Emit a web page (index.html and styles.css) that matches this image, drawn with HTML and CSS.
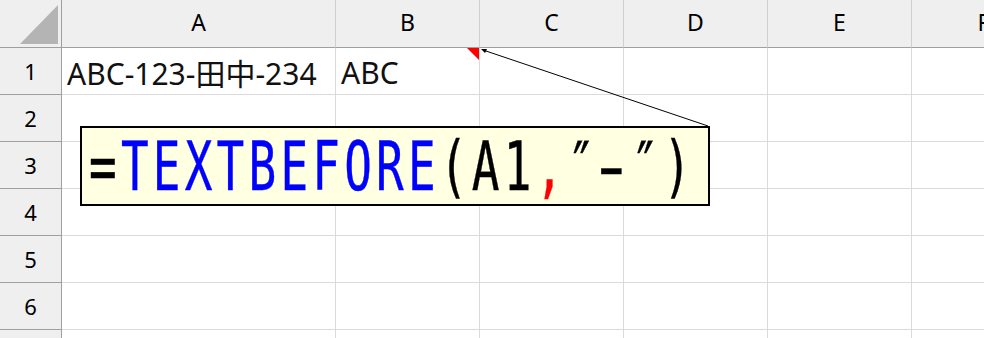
FILE: index.html
```html
<!DOCTYPE html>
<html lang="ja">
<head>
  <meta charset="UTF-8">
  <title>TEXTBEFORE</title>
  <link rel="stylesheet" href="styles.css">
</head>
<body>

<div class="sheet">
  <div class="grid">
    <div class="corner"><span class="corner-mark"></span></div>
    <div class="col-head">A</div>
    <div class="col-head">B</div>
    <div class="col-head">C</div>
    <div class="col-head">D</div>
    <div class="col-head">E</div>
    <div class="col-head">F</div>

    <div class="row-head">1</div>
    <div class="cell">ABC-123-田中-234</div>
    <div class="cell">ABC</div>
    <div class="cell"></div><div class="cell"></div><div class="cell"></div><div class="cell"></div>

    <div class="row-head">2</div>
    <div class="cell"></div><div class="cell"></div><div class="cell"></div><div class="cell"></div><div class="cell"></div><div class="cell"></div>

    <div class="row-head">3</div>
    <div class="cell"></div><div class="cell"></div><div class="cell"></div><div class="cell"></div><div class="cell"></div><div class="cell"></div>

    <div class="row-head">4</div>
    <div class="cell"></div><div class="cell"></div><div class="cell"></div><div class="cell"></div><div class="cell"></div><div class="cell"></div>

    <div class="row-head">5</div>
    <div class="cell"></div><div class="cell"></div><div class="cell"></div><div class="cell"></div><div class="cell"></div><div class="cell"></div>

    <div class="row-head">6</div>
    <div class="cell"></div><div class="cell"></div><div class="cell"></div><div class="cell"></div><div class="cell"></div><div class="cell"></div>

    <div class="row-head"></div>
    <div class="cell"></div><div class="cell"></div><div class="cell"></div><div class="cell"></div><div class="cell"></div><div class="cell"></div>
  </div>

  <!-- comment marker and callout line -->
  <svg class="callout-line" width="984" height="338" viewBox="0 0 984 338">
    <polygon points="467,48 479,48 479,60" fill="#ff0000"/>
    <line x1="708" y1="126" x2="483" y2="50" stroke="#000" stroke-width="1"/>
    <polygon points="481,49 487,49 485,53" fill="#000"/>
  </svg>

  <div class="formula-box">
    <span class="formula"><span class="black">=</span><span class="fn">TEXTBEFORE</span><span class="black">(A1</span><span class="sep">,</span><span class="black">″<span class="dash">-</span>″)</span></span>
  </div>
</div>

</body>
</html>
```

FILE: styles.css
```css
body {
  margin: 0;
  background: #fff;
  font-family: "Noto Sans", "Noto Sans CJK JP", sans-serif;
  overflow: hidden;
}
.sheet {
  position: relative;
  width: 984px;
  height: 338px;
  overflow: hidden;
}
.grid {
  display: grid;
  grid-template-columns: 62px 274px 144px 144px 144px 144px 144px;
  grid-template-rows: 48px repeat(7, 47px);
}
.corner, .col-head, .row-head, .cell {
  box-sizing: border-box;
}
.corner {
  background: #efefef;
  border-right: 1px solid #9f9f9f;
  border-bottom: 1px solid #9f9f9f;
  position: relative;
}
.corner-mark {
  position: absolute;
  left: 20px;
  top: 5px;
  width: 38px;
  height: 39px;
  background: #b4b4b4;
  clip-path: polygon(100% 0, 100% 100%, 0 100%);
}
.col-head {
  background: #efefef;
  border-right: 1px solid #d0d0d0;
  border-bottom: 1px solid #9f9f9f;
  display: flex;
  align-items: center;
  justify-content: center;
  font-size: 23px;
  color: #000;
  padding-bottom: 4px;
}
.row-head {
  background: #efefef;
  border-right: 1px solid #9f9f9f;
  border-bottom: 1px solid #9f9f9f;
  display: flex;
  align-items: center;
  justify-content: center;
  font-size: 22px;
  color: #000;
}
.cell {
  border-right: 1px solid #dadada;
  border-bottom: 1px solid #dadada;
  display: flex;
  align-items: center;
  padding-left: 5px;
  padding-top: 2px;
  font-size: 30px;
  color: #111;
  white-space: nowrap;
  overflow: visible;
}
.callout-line {
  position: absolute;
  left: 0;
  top: 0;
}
.formula-box {
  position: absolute;
  left: 80px;
  top: 126px;
  width: 630px;
  height: 80px;
  box-sizing: border-box;
  border: 2px solid #000;
  background: #ffffe1;
  padding-left: 7px;
  display: flex;
  align-items: center;
}
.formula {
  display: inline-block;
  font-family: "DejaVu Sans Mono", "Liberation Mono", monospace;
  font-size: 46px;
  letter-spacing: 4.2px;
  line-height: 1;
  white-space: nowrap;
  transform: scaleY(1.48);
  transform-origin: center;
  -webkit-text-stroke: 0.3px currentColor;
}
.dash {
  display: inline-block;
  transform: scaleX(1.7);
}
.black {
  color: #000;
}
.fn {
  color: #0000ff;
}
.sep {
  color: #ff0000;
}
```
